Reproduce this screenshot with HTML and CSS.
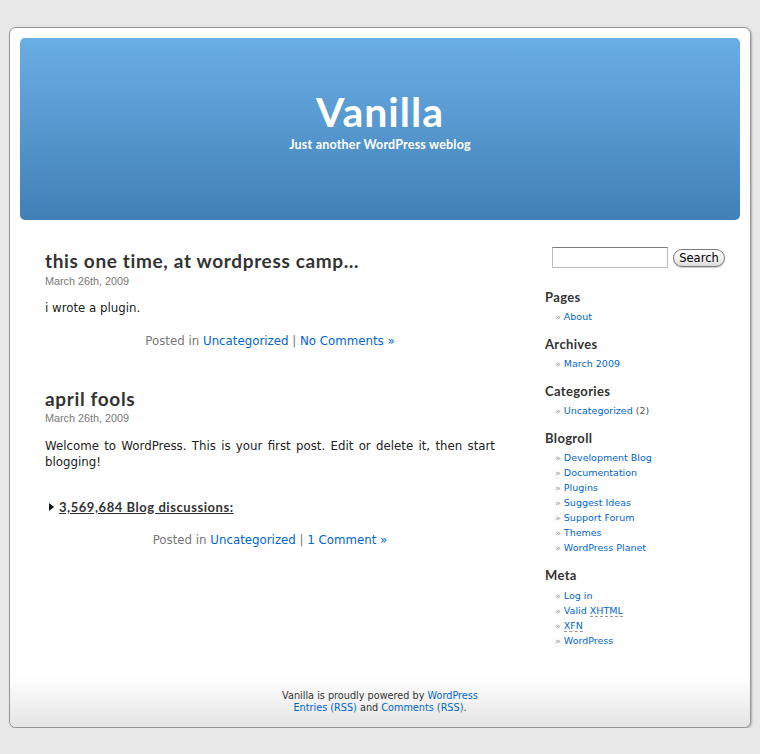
FILE: index.html
```html
<!DOCTYPE html>
<html lang="en">
<head>
<meta charset="utf-8">
<title>Vanilla</title>
<link rel="stylesheet" href="styles.css">
</head>
<body>
<div class="page">
  <header class="header">
    <h1 class="site-title">Vanilla</h1>
    <p class="site-desc">Just another WordPress weblog</p>
  </header>

  <div class="main">
    <div class="content">
      <article class="post">
        <h2 class="post-title">this one time, at wordpress camp…</h2>
        <div class="post-date">March 26th, 2009</div>
        <p class="entry">i wrote a plugin.</p>
        <p class="meta">Posted in <a href="#">Uncategorized</a> | <a href="#">No Comments »</a></p>
      </article>

      <article class="post post-next">
        <h2 class="post-title">april fools</h2>
        <div class="post-date">March 26th, 2009</div>
        <p class="entry">Welcome to WordPress. This is your first post. Edit or delete it, then start blogging!</p>
        <div class="discussions">
          <svg class="disc-arrow" width="5" height="8" viewBox="0 0 5 8"><path d="M0 0 L5 4 L0 8 Z" fill="#111"/></svg>
          <span class="disc-text">3,569,684 Blog discussions:</span>
        </div>
        <p class="meta meta-last">Posted in <a href="#">Uncategorized</a> | <a href="#">1 Comment »</a></p>
      </article>
    </div>

    <aside class="sidebar">
      <form class="search">
        <input class="search-input" type="text">
        <button class="search-btn" type="button">Search</button>
      </form>

      <section class="widget widget-first">
        <h2 class="widget-title">Pages</h2>
        <ul class="list">
          <li><a href="#">About</a></li>
        </ul>
      </section>

      <section class="widget">
        <h2 class="widget-title">Archives</h2>
        <ul class="list">
          <li><a href="#">March 2009</a></li>
        </ul>
      </section>

      <section class="widget">
        <h2 class="widget-title">Categories</h2>
        <ul class="list">
          <li><a href="#">Uncategorized</a> <span class="count">(2)</span></li>
        </ul>
      </section>

      <section class="widget">
        <h2 class="widget-title">Blogroll</h2>
        <ul class="list">
          <li><a href="#">Development Blog</a></li>
          <li><a href="#">Documentation</a></li>
          <li><a href="#">Plugins</a></li>
          <li><a href="#">Suggest Ideas</a></li>
          <li><a href="#">Support Forum</a></li>
          <li><a href="#">Themes</a></li>
          <li><a href="#">WordPress Planet</a></li>
        </ul>
      </section>

      <section class="widget">
        <h2 class="widget-title">Meta</h2>
        <ul class="list">
          <li><a href="#">Log in</a></li>
          <li><a href="#">Valid <abbr class="abbr" title="eXtensible HyperText Markup Language">XHTML</abbr></a></li>
          <li><a href="#"><abbr class="abbr" title="XHTML Friends Network">XFN</abbr></a></li>
          <li><a href="#">WordPress</a></li>
        </ul>
      </section>
    </aside>
  </div>

  <footer class="footer">
    <p class="footer-text">Vanilla is proudly powered by <a href="#">WordPress</a><br>
    <a href="#">Entries (RSS)</a> and <a href="#">Comments (RSS)</a>.</p>
  </footer>
</div>
</body>
</html>
```

FILE: styles.css
```css
html, body {
  margin: 0;
  padding: 0;
}

body {
  background: #e7e7e7;
  font-family: "DejaVu Sans", sans-serif;
  color: #333;
}

a {
  color: #06c;
  text-decoration: none;
}

.page {
  width: 740px;
  margin: 27px auto 0;
  background: #fff;
  border: 1px solid #959595;
  border-radius: 7px;
  box-shadow: 1px 1px 2px rgba(0, 0, 0, 0.25);
  overflow: hidden;
}

/* Header */
.header {
  margin: 10px 10px 0;
  height: 182px;
  box-sizing: border-box;
  padding-top: 54px;
  border-radius: 5px;
  background: linear-gradient(#6aaee6, #4180b6);
  text-align: center;
  color: #fff;
}

.site-title {
  margin: 0;
  font: 700 41px/40px Lato, sans-serif;
  letter-spacing: 1px;
}

.site-desc {
  margin: 6px 0 0;
  font: 700 12.5px/14px Lato, sans-serif;
  letter-spacing: 0.2px;
}

/* Main */
.main {
  display: flex;
  padding: 0 0 22px 35px;
}

.content {
  width: 450px;
  padding-top: 30px;
}

.post-next {
  margin-top: 39px;
}

.post-title {
  margin: 0;
  font: 700 19px/22px Lato, sans-serif;
  letter-spacing: 0.65px;
  color: #333;
}

.post-date {
  margin-top: 1.5px;
  font: 10.8px/14px "Liberation Sans", Arial, sans-serif;
  color: #777;
}

.entry {
  margin: 12.5px 0 0;
  font-size: 11.8px;
  line-height: 16px;
  color: #222;
  text-align: justify;
}

.meta {
  margin: 16.5px 0 0;
  font-size: 11.8px;
  line-height: 16px;
  color: #777;
  text-align: center;
}

.meta-last {
  margin-top: 17px;
}

.discussions {
  display: flex;
  align-items: center;
  margin-top: 29px;
  height: 16px;
}

.disc-arrow {
  margin: 0 5px 0 4px;
}

.disc-text {
  font: 700 13px/16px Lato, sans-serif;
  letter-spacing: 0.55px;
  color: #333;
  text-decoration: underline;
}

/* Sidebar */
.sidebar {
  width: 190px;
  margin-left: 50px;
  padding-top: 27px;
}

.search {
  display: flex;
  align-items: center;
  margin: 0 0 0 7px;
}

.search-input {
  width: 116px;
  height: 21px;
  box-sizing: border-box;
  border: 1px solid #bbb;
  border-top-color: #7c7c7c;
  margin: 0;
  padding: 0;
}

.search-btn {
  margin-left: 5px;
  width: 52px;
  height: 18px;
  box-sizing: border-box;
  padding: 0;
  border: 1px solid #7a7a7a;
  border-radius: 9px;
  background: linear-gradient(#fff, #f2f2f2 50%, #dcdcdc);
  box-shadow: 0 1px 1px rgba(0, 0, 0, 0.2);
  font: 11.5px/14px "DejaVu Sans", sans-serif;
  color: #000;
}

.widget-first {
  margin-top: 20.7px;
}

.widget + .widget {
  margin-top: 11.6px;
}

.widget-title {
  margin: 0;
  font: 700 13px/16px Lato, sans-serif;
  letter-spacing: 0.35px;
  color: #333;
}

.list {
  list-style: none;
  margin: 4.5px 0 0;
  padding: 0 0 0 10px;
  font-size: 9.5px;
  line-height: 15px;
}

.list li::before {
  content: "\00BB\00a0";
  color: #999;
}

.count {
  color: #555;
}

.abbr {
  text-decoration: none;
  border-bottom: 1px dashed #999;
}

/* Footer */
.footer {
  padding: 20px 0 12.3px;
  background: linear-gradient(#fff 12%, #e4e4e4 100%);
}

.footer-text {
  margin: 0;
  font-size: 9.7px;
  line-height: 12.5px;
  text-align: center;
  color: #333;
}
```
